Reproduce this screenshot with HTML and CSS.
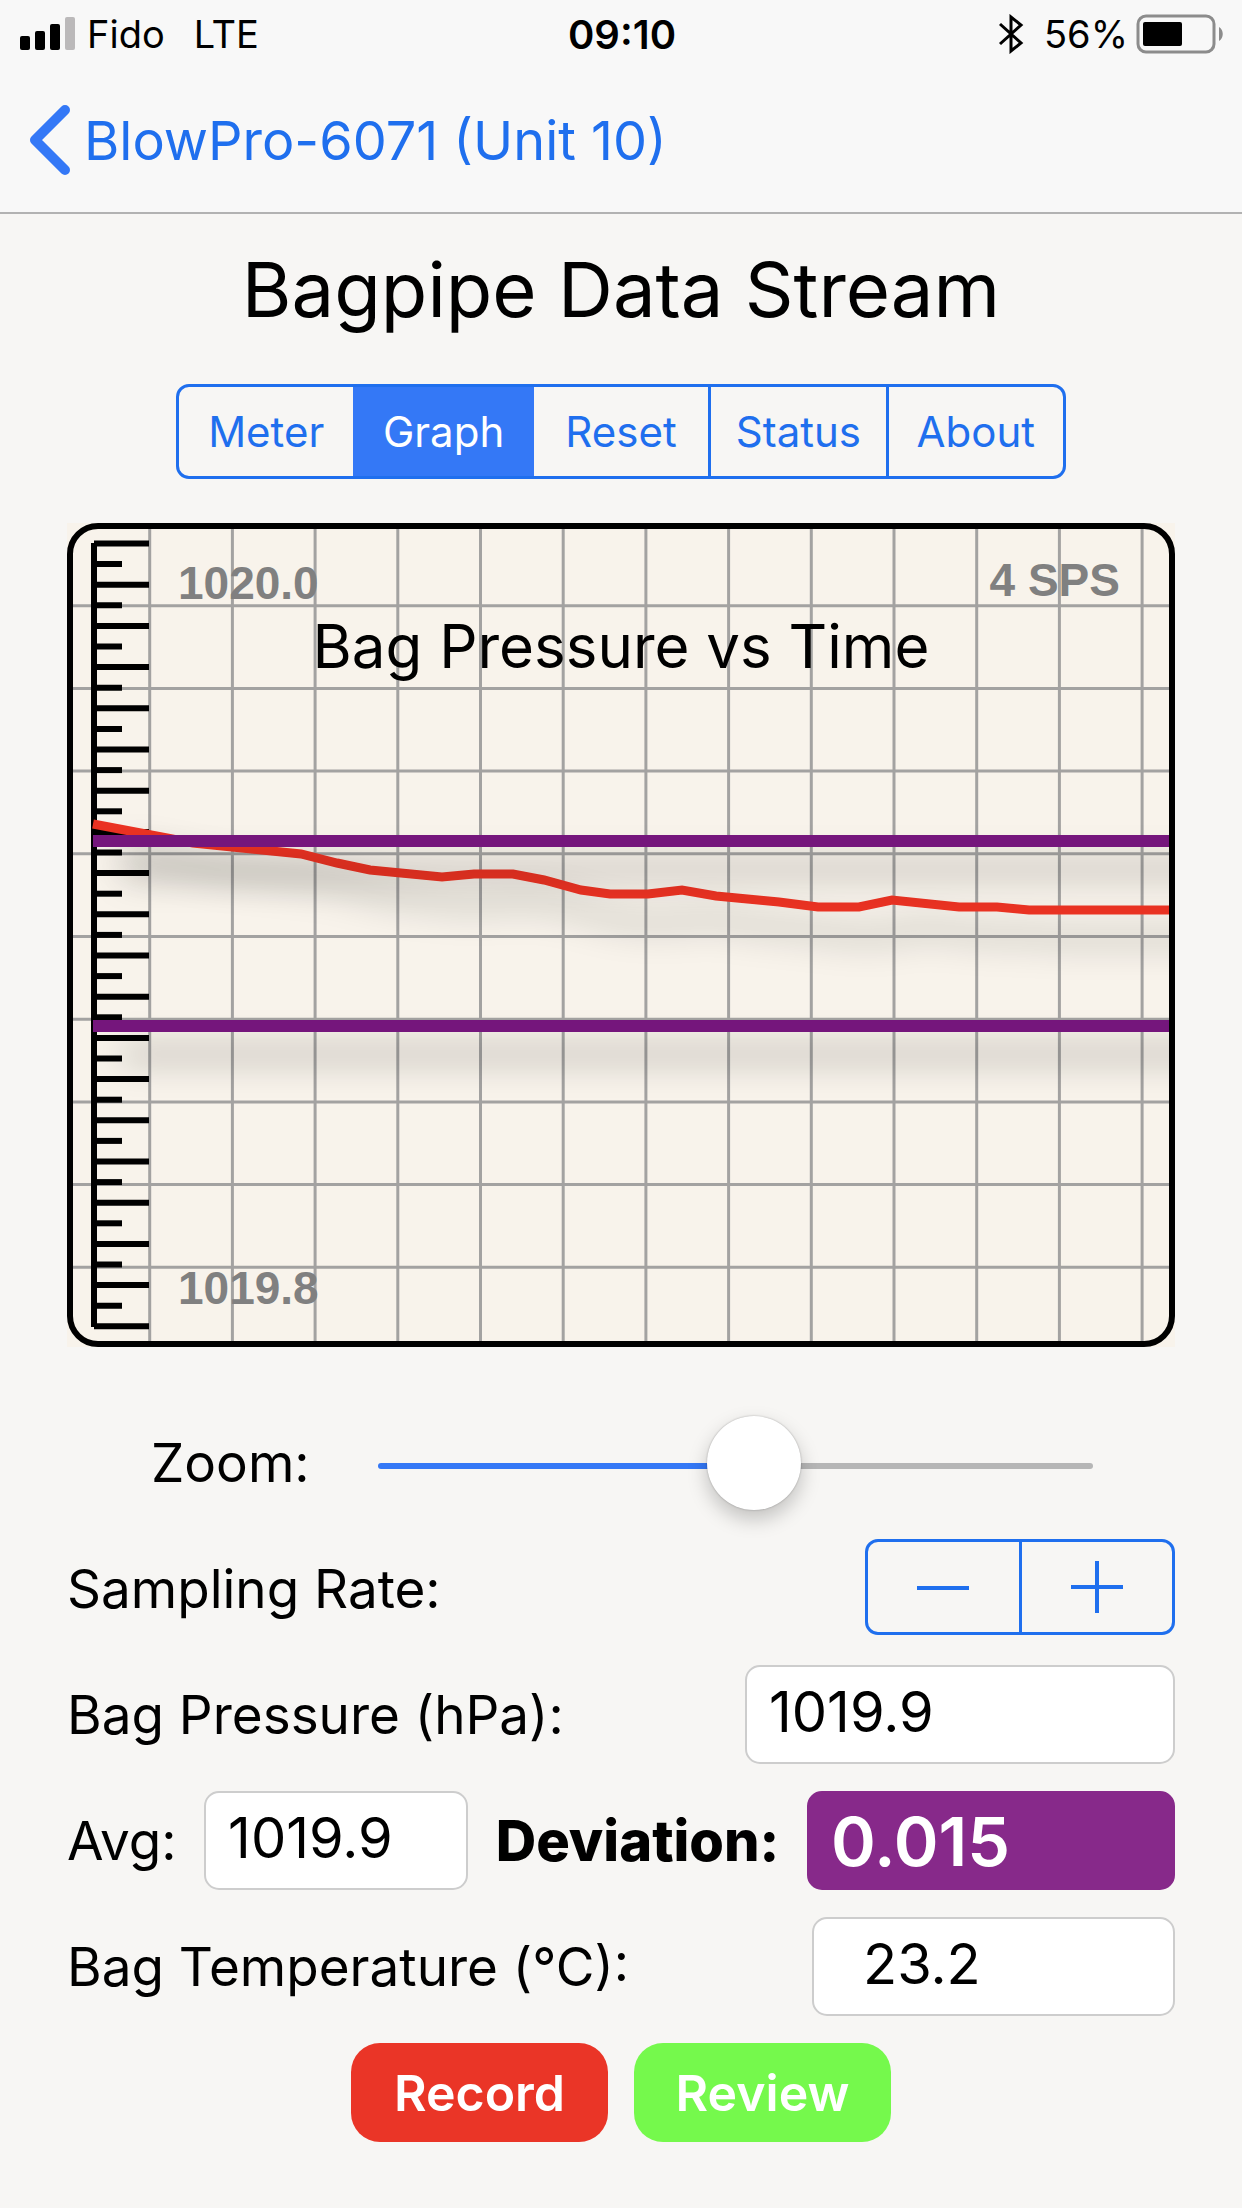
FILE: index.html
```html
<!DOCTYPE html>
<html lang="en">
<head>
  <meta charset="UTF-8" />
  <meta name="viewport" content="width=device-width, initial-scale=1.0" />
  <title>Bagpipe Data Stream</title>
  <link rel="stylesheet" href="styles.css">
</head>
<body>
  <header class="topbar">
    <div class="status">
      <div class="status-left">
        <svg class="signal" width="56" height="34" viewBox="0 0 56 34" aria-hidden="true">
          <rect x="0" y="19" width="10" height="14" rx="2" />
          <rect x="15" y="14" width="10" height="19" rx="2" />
          <rect x="30" y="7" width="10" height="26" rx="2" />
          <rect x="45" y="0" width="10" height="33" rx="2" fill="#bbb9ba" />
        </svg>
        <span>Fido</span>
        <span class="network">LTE</span>
      </div>
      <span class="clock">09:10</span>
      <div class="status-right">
        <svg class="bluetooth" width="26" height="40" viewBox="0 0 26 40" aria-hidden="true">
          <path d="M2 10 L23 29 L13 37 V3 L23 11 L2 30" fill="none" stroke="#000" stroke-width="3" />
        </svg>
        <span>56%</span>
        <svg class="battery" width="88" height="40" viewBox="0 0 88 40" aria-hidden="true">
          <rect x="2" y="2" width="76" height="36" rx="8" fill="none" stroke="#8c8c8c" stroke-width="3" />
          <rect x="7" y="8" width="39" height="24" rx="2" />
          <path d="M83 13 C88 16 88 24 83 27 Z" fill="#8c8c8c" />
        </svg>
      </div>
    </div>
    <nav class="navbar">
      <a class="back" href="#">
        <svg width="44" height="72" viewBox="0 0 44 72" aria-hidden="true">
          <path d="M39 6 L9 36 L39 66" />
        </svg>
        <span>BlowPro-6071 (Unit 10)</span>
      </a>
    </nav>
  </header>

  <main class="content">
    <h1>Bagpipe Data Stream</h1>

    <div class="segments">
      <button type="button">Meter</button>
      <button type="button" class="active">Graph</button>
      <button type="button">Reset</button>
      <button type="button">Status</button>
      <button type="button">About</button>
    </div>

    <div class="graph">
      <svg viewBox="0 0 1108 824" role="img" aria-label="Bag Pressure vs Time">
        <defs>
          <clipPath id="plot"><rect x="5" y="5" width="1098" height="814" rx="26" /></clipPath>
          <filter id="shadow" filterUnits="userSpaceOnUse" x="-50" y="200" width="1300" height="450">
            <feDropShadow dx="30" dy="28" stdDeviation="17" flood-color="#000" flood-opacity="0.33" />
          </filter>
        </defs>
        <g clip-path="url(#plot)">
          <g id="grid" class="grid"></g>
          <g id="scale" class="scale"></g>
          <polyline class="trace" filter="url(#shadow)" points="26,301 100,315 126,320 234,331 270,340 303,347 375,354 407,351 446,351 477,357 514,367 543,371 581,371 615,367 649,373 712,379 751,384 792,384 825,377 892,384 930,384 962,387 1200,387" />
          <path class="limit" filter="url(#shadow)" d="M26 318 H1200 M26 503 H1200" />
        </g>
        <rect class="frame" x="3" y="3" width="1102" height="818" rx="28" />
        <text class="mark" x="111" y="76">1020.0</text>
        <text class="mark" x="111" y="781">1019.8</text>
        <text class="mark" x="1053" y="73" text-anchor="end">4 SPS</text>
        <text class="caption" x="554" y="145" text-anchor="middle">Bag Pressure vs Time</text>
      </svg>
    </div>

    <div class="row zoom">
      <label for="zoom">Zoom:</label>
      <input type="range" id="zoom" min="0" max="100" step="1" value="53" />
    </div>

    <div class="row">
      <span>Sampling Rate:</span>
      <div class="stepper">
        <button type="button" aria-label="Decrease sampling rate">
          <svg width="52" height="52" viewBox="0 0 52 52"><path d="M0 27 H52" /></svg>
        </button>
        <button type="button" aria-label="Increase sampling rate">
          <svg width="52" height="52" viewBox="0 0 52 52"><path d="M0 26 H52 M26 0 V52" /></svg>
        </button>
      </div>
    </div>

    <div class="row">
      <label for="pressure">Bag Pressure (hPa):</label>
      <input type="text" id="pressure" class="field pressure" value="1019.9" />
    </div>

    <div class="row">
      <label for="avg">Avg:</label>
      <input type="text" id="avg" class="field avg" value="1019.9" />
      <label for="deviation" class="strong">Deviation:</label>
      <input type="text" id="deviation" class="field deviation" value="0.015" />
    </div>

    <div class="row">
      <label for="temperature">Bag Temperature (°C):</label>
      <input type="text" id="temperature" class="field temperature" value="23.2" />
    </div>

    <div class="actions">
      <button type="button" class="record">Record</button>
      <button type="button" class="review">Review</button>
    </div>
  </main>

<script>
    // grid lines
    const step = 82.7;
    let grid = '';
    for (let i = 1; i <= 13; i++) {
      grid += `<path d="M${i * step} 0 V824" />`;
    }
    for (let i = 1; i <= 9; i++) {
      grid += `<path d="M0 ${i * step} H1108" />`;
    }
    document.getElementById('grid').innerHTML = grid;

    // ruler on the left, every other tick is short
    let ticks = '<path d="M27 20 V804" />';
    for (let i = 0; i <= 38; i++) {
      const y = 20.5 + i * 20.6;
      ticks += `<path d="M27 ${y} H${i % 2 ? 55 : 82}" />`;
    }
    document.getElementById('scale').innerHTML = ticks;
</script>

</body>
</html>
```
FILE: styles.css
```css
:root {
  --page: #f7f6f4;
  --bar: #f8f8f8;
  --blue: #1f6fee;
  --blue-fill: #3478f6;
  --paper: #f8f3eb;
}

* {
  box-sizing: border-box;
}

body {
  font-family: Inter, "Liberation Sans", sans-serif;
  font-size: 53px;
  background-color: var(--page);
  color: #000;
  margin: 0;
}

button, input {
  font-family: inherit;
  margin: 0;
}

.topbar {
  background: var(--bar);
  border-bottom: 2px solid #b2b2b2;
}

.status {
  display: grid;
  grid-template-columns: 1fr auto 1fr;
  align-items: center;
  height: 68px;
  padding: 0 18px 0 20px;
  font-size: 38px;
}

.status-left, .status-right {
  display: flex;
  align-items: center;
}

.status-left {
  gap: 11px;
}

.network {
  margin-left: 18px;
}

.clock {
  font-size: 40px;
  font-weight: 600;
}

.status-right {
  justify-content: flex-end;
  gap: 8px;
}

.bluetooth {
  margin-right: 12px;
}

.navbar {
  height: 144px;
  padding: 0 26px;
  display: flex;
  align-items: center;
}

.back {
  display: flex;
  align-items: center;
  gap: 14px;
  color: var(--blue);
  font-size: 54px;
  text-decoration: none;
}

.back path {
  fill: none;
  stroke: var(--blue-fill);
  stroke-width: 10;
  stroke-linecap: round;
  stroke-linejoin: round;
}

.content {
  padding: 27px 67px 60px;
}

h1 {
  margin: 0 0 47px;
  font-size: 76px;
  font-weight: 400;
  line-height: 96px;
  text-align: center;
}

.segments {
  display: flex;
  height: 95px;
  margin: 0 109px 44px;
  border: 3px solid var(--blue);
  border-radius: 13px;
  overflow: hidden;
}

.segments button {
  flex: 1;
  padding: 0;
  border: 0;
  border-left: 3px solid var(--blue);
  background: none;
  color: var(--blue);
  font-size: 42px;
}

.segments button:first-child {
  border-left: 0;
}

.segments .active {
  background: var(--blue-fill);
  border-color: var(--blue-fill);
  color: #fff;
}

.segments .active + button {
  border-color: var(--blue-fill);
}

.graph {
  background: var(--paper);
  margin-bottom: 66px;
}

.graph svg {
  display: block;
  width: 100%;
}

.grid path {
  stroke: #a3a2a1;
  stroke-width: 3;
}

.scale path {
  stroke: #000;
  stroke-width: 6;
}

.trace {
  fill: none;
  stroke: #ea3223;
  stroke-width: 9;
}

.limit {
  fill: none;
  stroke: #74127b;
  stroke-width: 12;
}

.frame {
  fill: none;
  stroke: #000;
  stroke-width: 6;
}

.mark {
  font-family: "Liberation Sans", sans-serif;
  font-size: 46px;
  font-weight: 700;
  fill: #808080;
}

.caption {
  font-size: 60px;
}

.row {
  display: flex;
  align-items: center;
  justify-content: space-between;
  height: 99px;
  margin-bottom: 27px;
}

.strong {
  font-size: 56px;
  font-weight: 800;
}

.zoom {
  gap: 68px;
  padding: 0 82px 0 84px;
}

.zoom input {
  flex: 1;
  min-width: 0;
  height: 99px;
  padding-top: 6px;
  background: none;
  appearance: none;
  -webkit-appearance: none;
}

.zoom input::-webkit-slider-runnable-track {
  height: 6px;
  border-radius: 3px;
  background: linear-gradient(to right, var(--blue-fill) 53%, #b6b6b6 53%);
}

.zoom input::-webkit-slider-thumb {
  -webkit-appearance: none;
  width: 94px;
  height: 94px;
  margin-top: -47px;
  border-radius: 50%;
  background: #fff;
  box-shadow: 0 0 2px rgba(0, 0, 0, 0.3), 0 9px 20px rgba(0, 0, 0, 0.22);
}

.stepper {
  display: flex;
  align-self: flex-start;
  width: 310px;
  height: 96px;
  border: 3px solid var(--blue);
  border-radius: 13px;
}

.stepper button {
  flex: 1;
  display: flex;
  align-items: center;
  justify-content: center;
  padding: 0;
  border: 0;
  background: none;
}

.stepper button + button {
  border-left: 3px solid var(--blue);
}

.stepper path {
  stroke: var(--blue);
  stroke-width: 4;
}

.field {
  height: 99px;
  padding: 0 22px 6px;
  border: 2px solid #cdcdcd;
  border-radius: 15px;
  background: #fff;
  color: #000;
  font-size: 56px;
}

.pressure {
  width: 430px;
}

.avg {
  width: 264px;
}

.deviation {
  width: 368px;
  padding-bottom: 0;
  border-color: #87298a;
  background: #87298a;
  color: #fff;
  font-size: 68px;
  font-weight: 600;
}

.temperature {
  width: 363px;
  padding-left: 49px;
}

.actions {
  display: flex;
  justify-content: center;
  gap: 26px;
}

.actions button {
  width: 257px;
  height: 99px;
  padding: 0;
  border: 0;
  border-radius: 29px;
  color: #fff;
  font-size: 50px;
  font-weight: 600;
}

.record {
  background: #ea3527;
}

.review {
  background: #75f94c;
}
```
